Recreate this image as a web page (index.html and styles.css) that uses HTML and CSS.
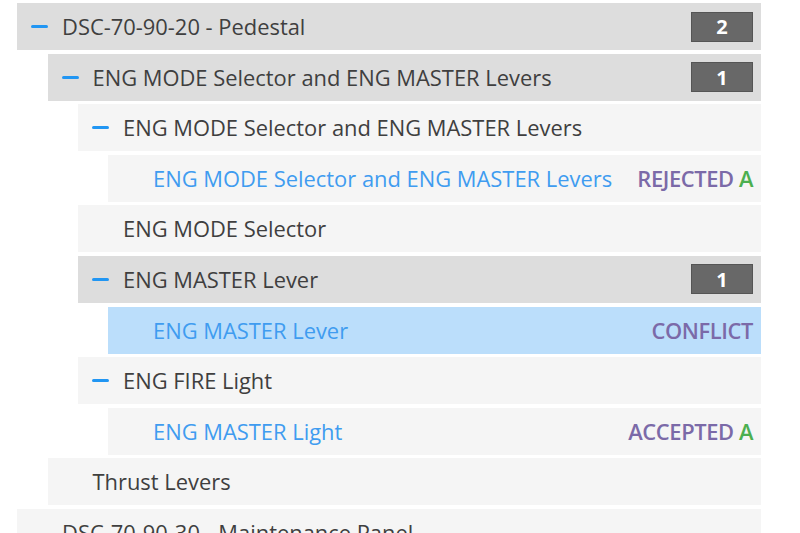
FILE: index.html
```html
<!DOCTYPE html>
<html>
<head>
<meta charset="utf-8">
<link rel="stylesheet" href="styles.css">
</head>
<body>
<div class="tree">
  <div class="row l0 dark"><span class="minus"></span><span class="label">DSC-70-90-20 - Pedestal</span><span class="badge">2</span></div>
  <div class="row l1 dark"><span class="minus"></span><span class="label">ENG MODE Selector and ENG MASTER Levers</span><span class="badge">1</span></div>
  <div class="row l2 light"><span class="minus"></span><span class="label">ENG MODE Selector and ENG MASTER Levers</span></div>
  <div class="row l3 light leaf"><span class="label link">ENG MODE Selector and ENG MASTER Levers</span><span class="status">REJECTED <span class="ok">A</span></span></div>
  <div class="row l2 light leaf"><span class="label">ENG MODE Selector</span></div>
  <div class="row l2 dark"><span class="minus"></span><span class="label">ENG MASTER Lever</span><span class="badge">1</span></div>
  <div class="row l3 selected leaf"><span class="label link">ENG MASTER Lever</span><span class="status">CONFLICT</span></div>
  <div class="row l2 light"><span class="minus"></span><span class="label">ENG FIRE Light</span></div>
  <div class="row l3 light leaf"><span class="label link">ENG MASTER Light</span><span class="status">ACCEPTED <span class="ok">A</span></span></div>
  <div class="row l1 light leaf"><span class="label">Thrust Levers</span></div>
  <div class="row l0 light leaf"><span class="label">DSC-70-90-30 - Maintenance Panel</span></div>
</div>
</body>
</html>
```
FILE: styles.css
```css
html, body {
  margin: 0;
  padding: 0;
  background: #ffffff;
  overflow: hidden;
}
body {
  font-family: "Open Sans", "Noto Sans", sans-serif;
  font-size: 21.9px;
  color: #3f3f3f;
}
.tree {
  margin: 3px 0 0 17px;
  width: 744px;
  display: flex;
  flex-direction: column;
  gap: 3.6px;
}
.row {
  display: flex;
  align-items: center;
  height: 47px;
  padding: 0 8px 0 14px;
  box-sizing: border-box;
  white-space: nowrap;
}
.row.leaf { padding-left: 45px; }
.l1 { margin-left: 30.5px; }
.l2 { margin-left: 61px; }
.l3 { margin-left: 91px; }
.dark { background: #dddddd; }
.light { background: #f5f5f5; }
.selected { background: #bbdefb; }
.minus {
  width: 17px;
  height: 3px;
  border-radius: 1.5px;
  background: #2196f3;
  margin-right: 14px;
  flex: none;
}
.label { flex: 1; }
.link { color: #3f9cf0; }
.badge {
  width: 62px;
  height: 30px;
  box-sizing: border-box;
  background: #686868;
  border: 1px solid #555555;
  color: #ffffff;
  font-weight: 700;
  font-size: 20px;
  display: flex;
  align-items: center;
  justify-content: center;
}
.status {
  color: #7b6aa8;
  font-weight: 600;
  letter-spacing: -0.4px;
}
.ok { color: #4caf50; }
```
